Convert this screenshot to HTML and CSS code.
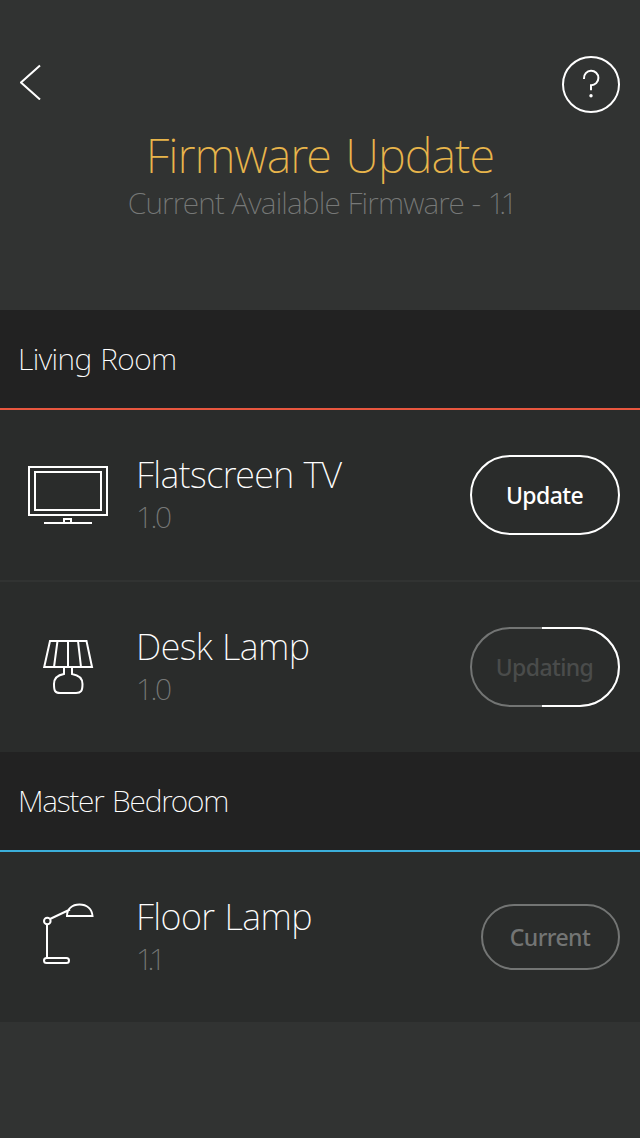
FILE: index.html
```html
<!DOCTYPE html>
<html lang="en">
<head>
<meta charset="utf-8">
<title>Firmware Update</title>
<link rel="stylesheet" href="styles.css">
</head>
<body>
<header class="header">
  <nav class="nav">
    <button class="icon-button" aria-label="Back">
      <svg width="22" height="36" viewBox="0 0 22 36"><path d="M20 1.500 1 18.500l19 17" fill="none" stroke="#fff" stroke-width="2"/></svg>
    </button>
    <button class="icon-button" aria-label="Help">
      <svg width="58" height="58" viewBox="0 0 58 58" fill="none" stroke="#fff" stroke-width="2"><ellipse cx="29" cy="28.500" rx="28" ry="27.500"/><path d="M22 23v-.5a7.200 7.200 0 1 1 7 6.700v5"/><circle cx="29" cy="39.800" r="1.700" fill="#fff" stroke="none"/></svg>
    </button>
  </nav>
  <h1 class="title">Firmware Update</h1>
  <p class="subtitle">Current Available Firmware - <span class="tight">1.1</span></p>
</header>
<main>
  <section>
    <h2 class="room room-red"><span class="living">Living Room</span></h2>
    <div class="device">
      <svg class="device-icon" width="80" height="60" viewBox="0 0 80 60" fill="none" stroke="#fff" stroke-width="2"><rect x="1" y="2" width="78" height="48"/><rect x="7" y="7" width="66" height="38"/><path d="M16 58h48M36 58v-4h7v4"/></svg>
      <div class="info"><h3 class="name">Flatscreen TV</h3><p class="version">1.0</p></div>
      <button class="pill">Update</button>
    </div>
    <div class="device divided">
      <svg class="device-icon" width="80" height="60" viewBox="0 0 80 60" fill="none" stroke="#fff" stroke-width="2"><path d="M22 4h36.500l5.500 26H16.200zM29.500 4 26 30M40 4v26M50 4l3 26M36 30v7c-6 1-10 4-10 10 0 7 1 9 6 9h16c5 0 6.500-2 6.500-9 0-6-4.500-9-10.500-10v-7"/></svg>
      <div class="info"><h3 class="name">Desk Lamp</h3><p class="version">1.0</p></div>
      <button class="pill updating">Updating
        <svg class="progress" width="150" height="80" viewBox="0 0 150 80" fill="none" stroke="#fff" stroke-width="2"><path d="M72 1h38a39 39 0 0 1 0 78H72"/></svg>
      </button>
    </div>
  </section>
  <section>
    <h2 class="room room-blue"><span class="master">Master Bedroom</span></h2>
    <div class="device">
      <svg class="device-icon" width="80" height="64" viewBox="0 4 80 64" fill="none" stroke="#fff" stroke-width="2"><circle cx="19.300" cy="20" r="3.300"/><path d="M22 18 42 8.500M39 15c0-7 5-11.500 12.500-11.500S64 8 64.500 15zM19 23.500V57" /><rect x="16" y="57" width="25" height="5" rx="2.500"/></svg>
      <div class="info"><h3 class="name">Floor Lamp</h3><p class="version tight">1.1</p></div>
      <button class="pill current">Current</button>
    </div>
  </section>
</main>
</body>
</html>
```
FILE: styles.css
```css
* { box-sizing: border-box; margin: 0; padding: 0; }
body {
  min-height: 1138px;
  background: #313332;
  color: #fff;
  font-family: "Noto Sans", "Open Sans", sans-serif;
  font-weight: 250;
}
h1, h2, h3 { font-weight: inherit; }
button { background: none; border: 0; color: inherit; font-family: inherit; }
.header { height: 310px; padding-top: 56px; }
.nav { display: flex; justify-content: space-between; align-items: flex-start; height: 71px; padding: 0 20px; }
.icon-button svg { display: block; }
.icon-button:first-child { padding-top: 8px; }
.title { color: #e8b54b; font-size: 47px; line-height: 56px; letter-spacing: -.95px; word-spacing: 3px; text-align: center; white-space: nowrap; }
.subtitle { color: #777978; font-size: 30px; line-height: 40px; letter-spacing: -.82px; word-spacing: .5px; text-align: center; white-space: nowrap; }
.room { display: flex; align-items: center; height: 100px; padding: 0 0 1px 18px; background: #222; border-bottom: 2px solid; font-size: 30px; }
.room-red { border-color: #e9573f; }
.room-blue { border-color: #3bafda; }
.room span { color: #fff; }
.living { letter-spacing: -.55px; word-spacing: 1.500px; }
.master { letter-spacing: -1.2px; word-spacing: 2px; }
.device { display: flex; align-items: center; height: 170px; padding: 0 20px 0 28px; background: #2a2c2b; }
.divided { height: 172px; border-top: 2px solid #313332; }
.device-icon { flex: none; overflow: visible; }
.info { flex: 1; padding: 0 0 2px 28px; white-space: nowrap; }
.name { padding-top: 2px; font-size: 36px; line-height: 44px; letter-spacing: -.55px; word-spacing: 1px; }
.version { color: #777978; font-size: 30px; line-height: 40px; letter-spacing: -2.5px; }
.tight { letter-spacing: -5.500px; }
.pill { position: relative; width: 150px; height: 80px; padding: 0 1px 1px 0; border: 2px solid #fff; border-radius: 40px; font-size: 23px; font-weight: 480; letter-spacing: -.6px; }
.updating { border-color: #737574; color: #4a4c4b; }
.progress { position: absolute; top: -2px; left: -2px; }
.current { width: 139px; height: 66px; border-color: #737574; color: #737574; }
```
